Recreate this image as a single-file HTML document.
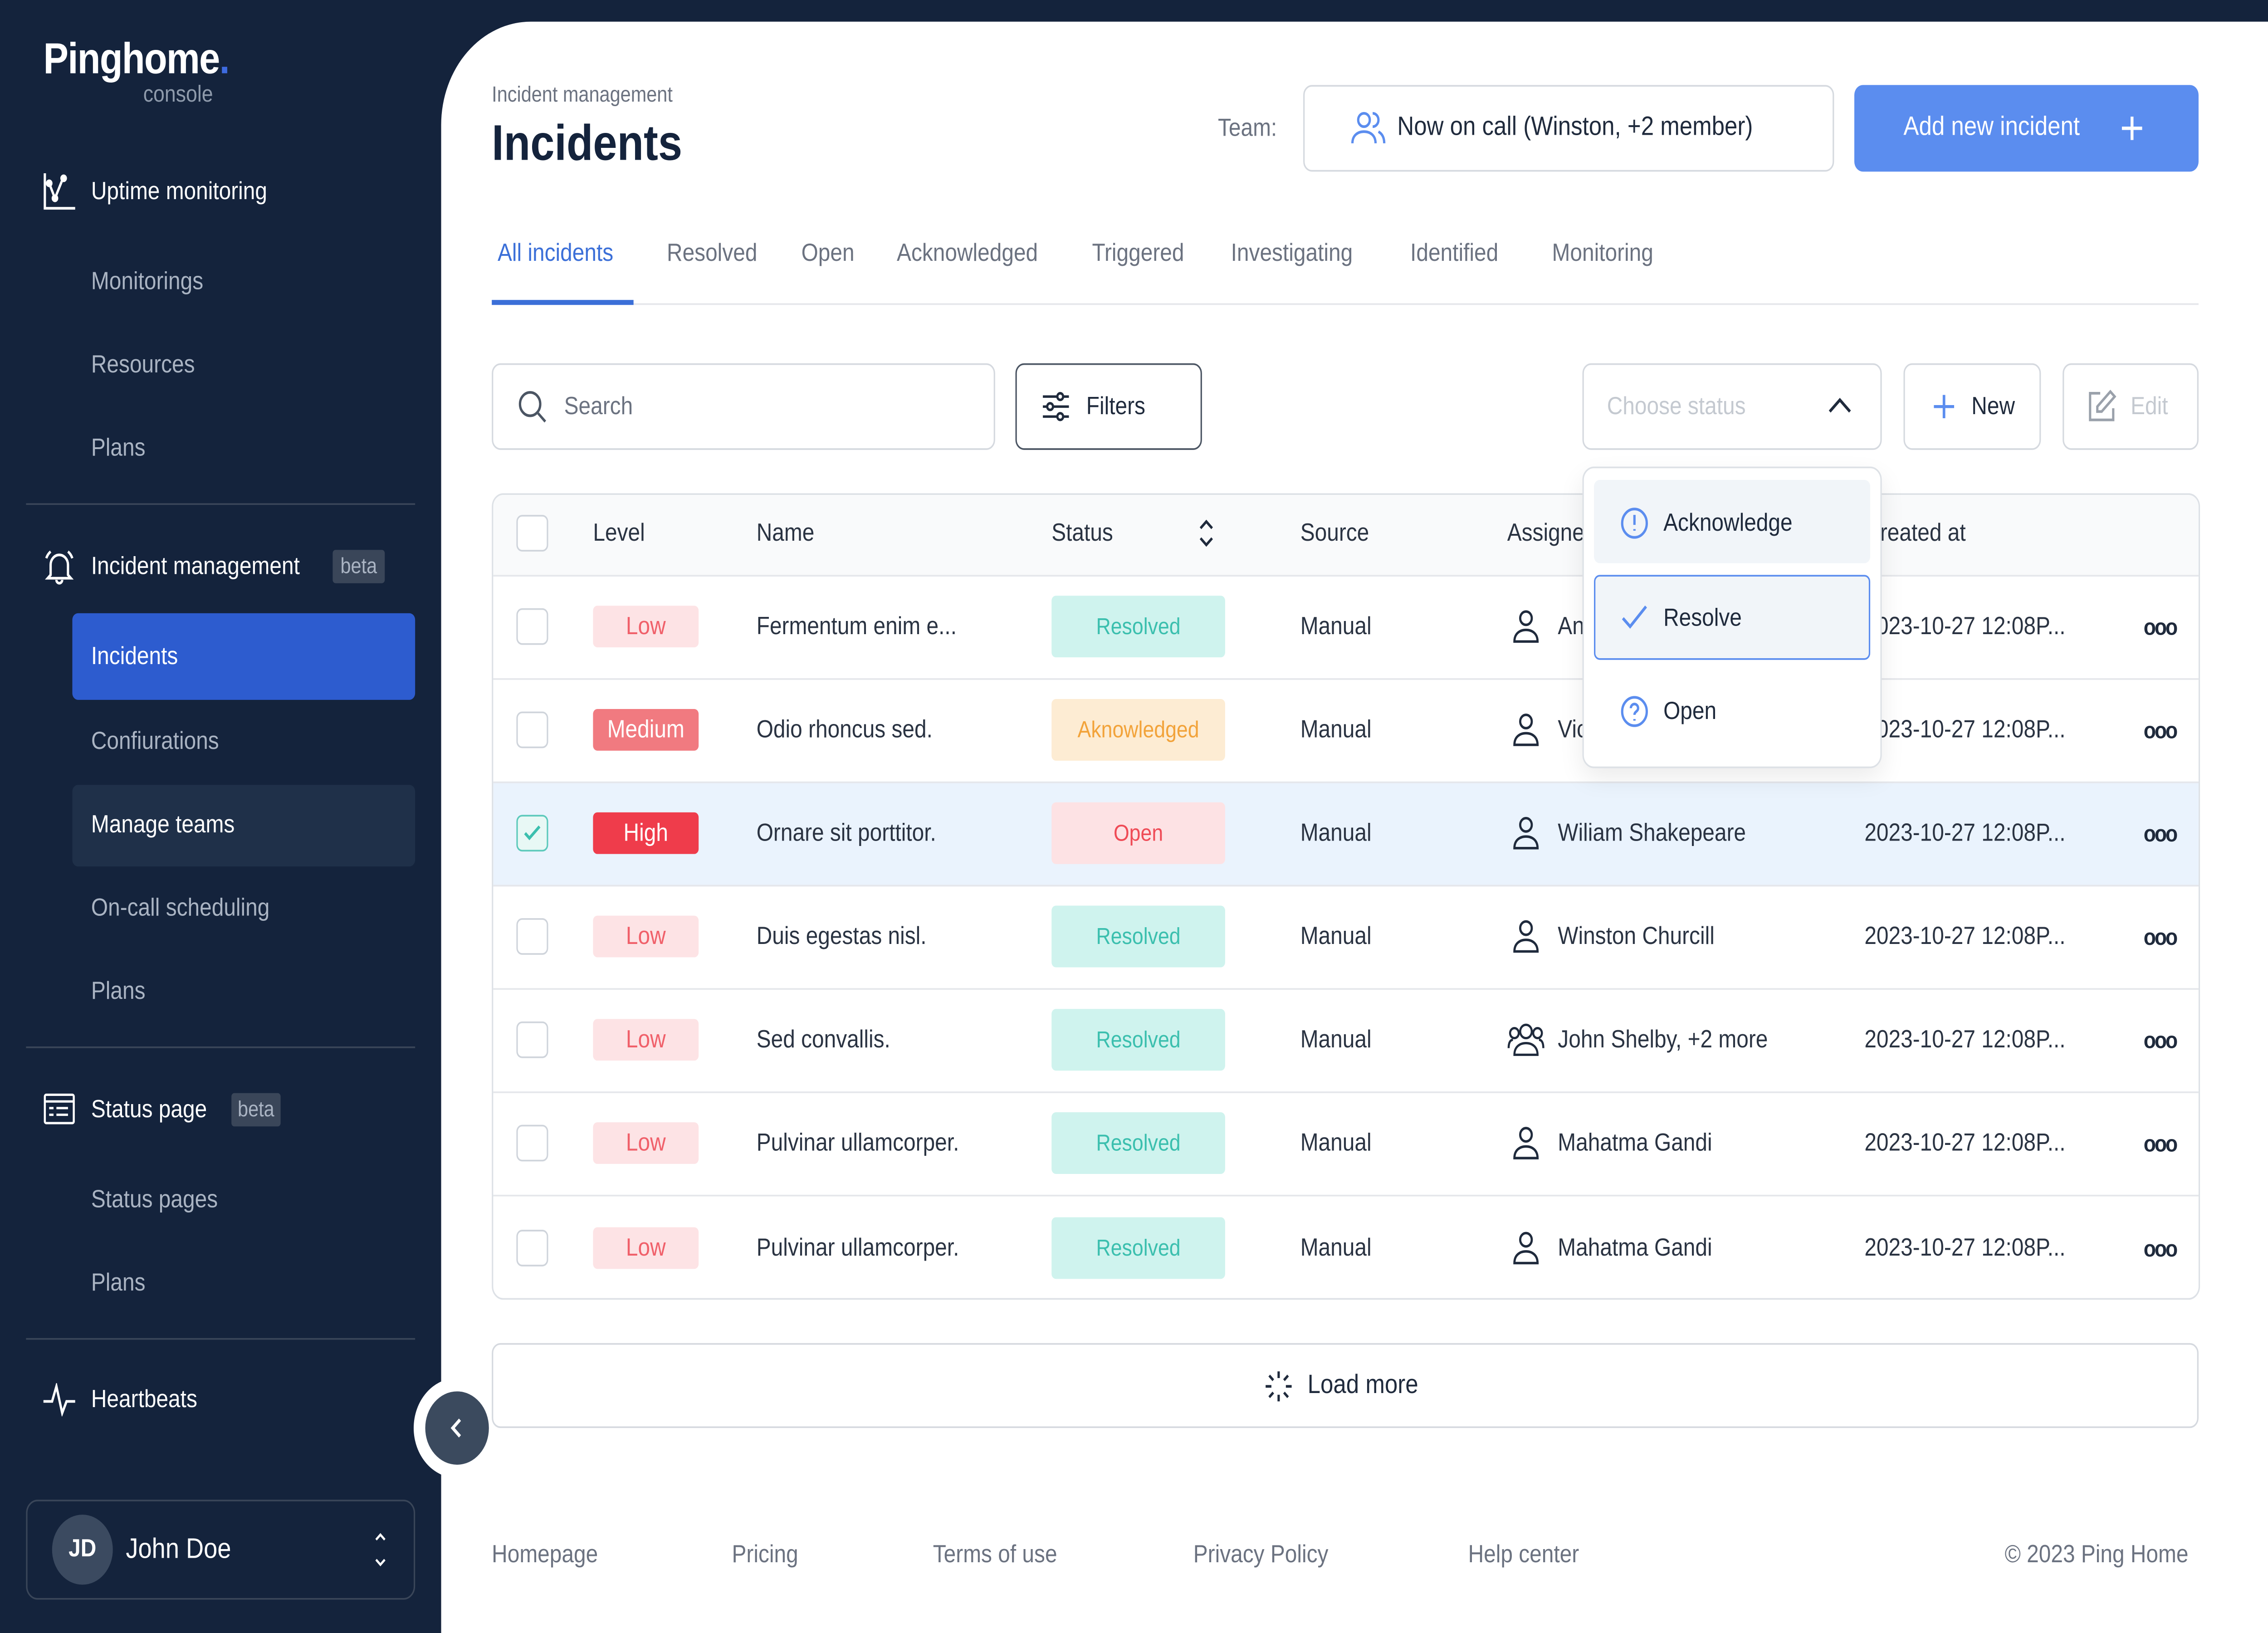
<!DOCTYPE html>
<html><head><meta charset="utf-8"><style>
*{box-sizing:border-box;margin:0;padding:0}
html,body{width:100vw;height:100vh;overflow:hidden;background:#14233c}
#s{position:absolute;left:0;top:0;width:1568px;height:980px;transform:scale(3.673469);transform-origin:0 0;font-family:"Liberation Sans",sans-serif;background:#14233c}
.a{position:absolute;white-space:nowrap}
.sb{color:#fff;font-size:15px}
.sub{color:#aab4c3;font-size:15px}
.vc{transform:translateY(-50%)}
.main{position:absolute;left:305px;top:13px;width:1263px;height:967px;background:#fff;border-top-left-radius:62px}
.tab{position:absolute;top:152px;transform:translateY(-50%);font-size:15px;color:#6b7280}
.box{position:absolute;border:1px solid #d5d9df;border-radius:6px;background:#fff}
.hd{font-size:15px;color:#1f2a3c}
.cell{position:absolute;font-size:15px;color:#2a3342;transform:translateY(-50%);white-space:nowrap}
.cb{position:absolute;left:357px;width:22px;height:22px;border:1.5px solid #cfd4db;border-radius:4px;background:#fff;transform:translateY(-50%)}
.lv{position:absolute;left:410px;width:73px;height:25px;border-radius:3px;font-size:15px;text-align:center;line-height:25px;transform:translateY(-50%)}
.st{position:absolute;left:727px;width:120px;height:37px;border-radius:3px;font-size:14px;text-align:center;line-height:37px;transform:translateY(-50%)}
.res{background:#cff3ee;color:#3bbfae}
.low{background:#fde3e5;color:#f0606a}
.dots{position:absolute;left:1482px;font-size:14px;font-weight:bold;color:#1f2a3c;letter-spacing:-1px;transform:translateY(-50%)}
.ft{position:absolute;top:933px;transform:translateY(-50%);font-size:15px;color:#6b7280}
</style></head><body><div id="s">
<!-- sidebar -->
<div class="a" style="left:30px;top:20px;font-size:26px;font-weight:bold;color:#fff;letter-spacing:-0.5px">Pinghome<span style="color:#3e6be0">.</span></div>
<div class="a" style="left:99px;top:48px;font-size:14px;color:#8e9aab">console</div>
<svg class="a" style="left:30px;top:104px" width="22" height="22" viewBox="0 0 22 22" fill="none" stroke="#fff" stroke-width="1.6"><path d="M1 0v21h21"/><path d="M4 6l4 9 6-13"/><circle cx="8" cy="15" r="1.5" fill="#fff"/><circle cx="14" cy="3" r="1.5" fill="#fff"/><circle cx="4" cy="6" r="1.5" fill="#fff"/></svg>
<div class="a sb vc" style="left:63px;top:115px">Uptime monitoring</div>
<div class="a sub vc" style="left:63px;top:169px">Monitorings</div>
<div class="a sub vc" style="left:63px;top:219px">Resources</div>
<div class="a sub vc" style="left:63px;top:269px">Plans</div>
<div class="a" style="left:18px;top:302px;width:269px;height:1px;background:#3a4659"></div>
<svg class="a" style="left:30px;top:329px" width="22" height="22" viewBox="0 0 22 22" fill="none" stroke="#fff" stroke-width="1.6"><path d="M5 16V10a6 6 0 0112 0v6l2 2H3z"/><path d="M9 19a2 2 0 004 0"/><path d="M2 6a9 9 0 013-4M20 6a9 9 0 00-3-4"/></svg>
<div class="a sb vc" style="left:63px;top:340px">Incident management</div>
<div class="a" style="left:230px;top:330px;width:36px;height:20px;background:#3a4659;color:#aab4c3;font-size:13px;text-align:center;line-height:20px;border-radius:2px">beta</div>
<div class="a" style="left:50px;top:368px;width:237px;height:52px;background:#2d5ccf;border-radius:4px"></div>
<div class="a sb vc" style="left:63px;top:394px">Incidents</div>
<div class="a sub vc" style="left:63px;top:445px">Confiurations</div>
<div class="a" style="left:50px;top:471px;width:237px;height:49px;background:#1f3049;border-radius:4px"></div>
<div class="a sb vc" style="left:63px;top:495px">Manage teams</div>
<div class="a sub vc" style="left:63px;top:545px">On-call scheduling</div>
<div class="a sub vc" style="left:63px;top:595px">Plans</div>
<div class="a" style="left:18px;top:628px;width:269px;height:1px;background:#3a4659"></div>
<svg class="a" style="left:30px;top:656px" width="22" height="20" viewBox="0 0 22 20" fill="none" stroke="#fff" stroke-width="1.4"><rect x="1" y="1" width="20" height="17" rx="1"/><path d="M1 5h20M4 9h3M9 9h8M4 13h3M9 13h8"/></svg>
<div class="a sb vc" style="left:63px;top:666px">Status page</div>
<div class="a" style="left:160px;top:656px;width:34px;height:20px;background:#3a4659;color:#aab4c3;font-size:13px;text-align:center;line-height:20px;border-radius:2px">beta</div>
<div class="a sub vc" style="left:63px;top:720px">Status pages</div>
<div class="a sub vc" style="left:63px;top:770px">Plans</div>
<div class="a" style="left:18px;top:803px;width:269px;height:1px;background:#3a4659"></div>
<svg class="a" style="left:30px;top:830px" width="22" height="20" viewBox="0 0 22 20" fill="none" stroke="#fff" stroke-width="1.6"><path d="M0 11h6l3-9 4 16 3-7h6"/></svg>
<div class="a sb vc" style="left:63px;top:840px">Heartbeats</div>
<div class="a" style="left:18px;top:900px;width:269px;height:60px;border:1px solid #3a4659;border-radius:8px"></div>
<div class="a" style="left:36px;top:909px;width:42px;height:42px;border-radius:50%;background:#3b4a60;color:#fff;font-size:15px;font-weight:bold;text-align:center;line-height:42px">JD</div>
<div class="a vc" style="left:87px;top:930px;color:#fff;font-size:17px">John Doe</div>
<svg class="a" style="left:258px;top:917px" width="10" height="26" viewBox="0 0 10 26" fill="none" stroke="#fff" stroke-width="1.4"><path d="M2 7l3-3 3 3M2 19l3 3 3-3"/></svg>
<!-- main -->
<div class="main"></div>
<div class="a" style="left:286px;top:827px;width:60px;height:60px;border-radius:50%;background:#fff"></div>
<div class="a" style="left:294px;top:835px;width:44px;height:44px;border-radius:50%;background:#3b4a5e"></div>
<svg class="a" style="left:309px;top:850px" width="14" height="14" viewBox="0 0 14 14" fill="none" stroke="#fff" stroke-width="2"><path d="M9 2L4 7l5 5"/></svg>
<div class="a" style="left:340px;top:49px;font-size:13px;color:#6b7280">Incident management</div>
<div class="a" style="left:340px;top:70px;font-size:30px;font-weight:bold;color:#14233c">Incidents</div>
<div class="a vc" style="left:842px;top:77px;font-size:15px;color:#6b7280">Team:</div>
<div class="box" style="left:901px;top:51px;width:367px;height:52px"></div>
<svg class="a" style="left:934px;top:66px" width="24" height="22" viewBox="0 0 24 22" fill="none" stroke="#5b8def" stroke-width="1.6"><circle cx="9" cy="6" r="4"/><path d="M1 20c0-5 4-7 8-7s8 2 8 7"/><path d="M15 2a4 4 0 010 8M19 13c2 1 4 3 4 7"/></svg>
<div class="a vc" style="left:966px;top:77px;font-size:16px;color:#1f2a3c">Now on call (Winston, +2 member)</div>
<div class="a" style="left:1282px;top:51px;width:238px;height:52px;background:#5b8def;border-radius:6px"></div>
<div class="a vc" style="left:1316px;top:77px;font-size:16px;color:#fff">Add new incident</div>
<svg class="a" style="left:1466px;top:69px" width="16" height="16" viewBox="0 0 16 16" stroke="#fff" stroke-width="2"><path d="M8 1v14M1 8h14"/></svg>
<!-- tabs -->
<div class="tab" style="left:344px;color:#3b6fd8">All incidents</div>
<div class="tab" style="left:461px">Resolved</div>
<div class="tab" style="left:554px">Open</div>
<div class="tab" style="left:620px">Acknowledged</div>
<div class="tab" style="left:755px">Triggered</div>
<div class="tab" style="left:851px">Investigating</div>
<div class="tab" style="left:975px">Identified</div>
<div class="tab" style="left:1073px">Monitoring</div>
<div class="a" style="left:340px;top:182px;width:1180px;height:1px;background:#e5e7eb"></div>
<div class="a" style="left:340px;top:180px;width:98px;height:3px;background:#3b6fd8"></div>
<!-- toolbar -->
<div class="box" style="left:340px;top:218px;width:348px;height:52px"></div>
<svg class="a" style="left:358px;top:234px" width="20" height="20" viewBox="0 0 20 20" fill="none" stroke="#4b5563" stroke-width="1.6"><circle cx="8.5" cy="8.5" r="7"/><path d="M14 14l5 5"/></svg>
<div class="a vc" style="left:390px;top:244px;font-size:15px;color:#6b7280">Search</div>
<div class="box" style="left:702px;top:218px;width:129px;height:52px;border-color:#4b5563"></div>
<svg class="a" style="left:720px;top:234px" width="20" height="20" viewBox="0 0 20 20" fill="none" stroke="#1f2a3c" stroke-width="1.5"><path d="M1 4h18M1 10h18M1 16h18"/><circle cx="13" cy="4" r="2" fill="#fff"/><circle cx="6" cy="10" r="2" fill="#fff"/><circle cx="13" cy="16" r="2" fill="#fff"/></svg>
<div class="a vc" style="left:751px;top:244px;font-size:15px;color:#1f2a3c">Filters</div>
<div class="box" style="left:1094px;top:218px;width:207px;height:52px"></div>
<div class="a vc" style="left:1111px;top:244px;font-size:15px;color:#c4c9d0">Choose status</div>
<svg class="a" style="left:1263px;top:237px" width="18" height="12" viewBox="0 0 18 12" fill="none" stroke="#1f2a3c" stroke-width="1.8"><path d="M2 10l7-7 7 7"/></svg>
<div class="box" style="left:1316px;top:218px;width:95px;height:52px"></div>
<svg class="a" style="left:1336px;top:236px" width="16" height="16" viewBox="0 0 16 16" stroke="#5b8def" stroke-width="1.8"><path d="M8 1v14M1 8h14"/></svg>
<div class="a vc" style="left:1363px;top:244px;font-size:15px;color:#1f2a3c">New</div>
<div class="box" style="left:1426px;top:218px;width:94px;height:52px"></div>
<svg class="a" style="left:1442px;top:233px" width="22" height="22" viewBox="0 0 22 22" fill="none" stroke="#9aa1ab" stroke-width="1.6"><path d="M10 3H3v16h16v-7"/><path d="M17 2l3 3-9 9H8v-3z"/></svg>
<div class="a vc" style="left:1473px;top:244px;font-size:15px;color:#c4c9d0">Edit</div>
<!-- table -->
<div class="a" style="left:340px;top:296px;width:1181px;height:484px;border:1px solid #dde1e6;border-radius:8px;overflow:hidden;background:#fff">
 <div style="position:absolute;left:0;top:0;width:100%;height:49px;background:#f9fafb;border-bottom:1px solid #e5e7eb"></div>
 <div style="position:absolute;left:0;top:110px;width:100%;height:1px;background:#e5e7eb"></div>
 <div style="position:absolute;left:0;top:172px;width:100%;height:63px;background:#eaf3fd;border-top:1px solid #e5e7eb;border-bottom:1px solid #e5e7eb"></div>
 <div style="position:absolute;left:0;top:296px;width:100%;height:1px;background:#e5e7eb"></div>
 <div style="position:absolute;left:0;top:358px;width:100%;height:1px;background:#e5e7eb"></div>
 <div style="position:absolute;left:0;top:420px;width:100%;height:1px;background:#e5e7eb"></div>
</div>
<div class="cb" style="top:320px"></div>
<div class="cell hd" style="left:410px;top:320px">Level</div>
<div class="cell hd" style="left:523px;top:320px">Name</div>
<div class="cell hd" style="left:727px;top:320px">Status</div>
<svg class="a" style="left:827px;top:310px" width="14" height="20" viewBox="0 0 14 20" fill="none" stroke="#1f2a3c" stroke-width="1.6"><path d="M3 7l4-4 4 4M3 13l4 4 4-4"/></svg>
<div class="cell hd" style="left:899px;top:320px">Source</div>
<div class="cell hd" style="left:1042px;top:320px">Assignee</div>
<div class="cell hd" style="left:1289px;top:320px">Created at</div>

<div class="cb" style="top:376px"></div><div class="lv low" style="top:376px">Low</div><div class="cell" style="left:523px;top:376px">Fermentum enim e...</div><div class="st res" style="top:376px">Resolved</div><div class="cell" style="left:899px;top:376px">Manual</div><div class="cell" style="left:1077px;top:376px">Ann</div><div class="cell" style="left:1289px;top:376px">2023-10-27 12:08P...</div><div class="dots" style="top:376px">ooo</div>
<div class="cb" style="top:438px"></div><div class="lv" style="top:438px;background:#f17a80;color:#fff">Medium</div><div class="cell" style="left:523px;top:438px">Odio rhoncus sed.</div><div class="st" style="top:438px;background:#fdecd3;color:#f2a33a">Aknowledged</div><div class="cell" style="left:899px;top:438px">Manual</div><div class="cell" style="left:1077px;top:438px">Vic</div><div class="cell" style="left:1289px;top:438px">2023-10-27 12:08P...</div><div class="dots" style="top:438px">ooo</div>
<div class="cb" style="top:500px;border-color:#5cc9bb;background:#e8f8f5"></div><svg class="a" style="left:361px;top:493px" width="14" height="14" viewBox="0 0 14 14" fill="none" stroke="#3bbfae" stroke-width="1.8"><path d="M2 7l3 3 7-7"/></svg><div class="lv" style="top:500px;background:#ef3c4b;color:#fff">High</div><div class="cell" style="left:523px;top:500px">Ornare sit porttitor.</div><div class="st" style="top:500px;background:#fde2e4;color:#ef4b56">Open</div><div class="cell" style="left:899px;top:500px">Manual</div><div class="cell" style="left:1077px;top:500px">Wiliam Shakepeare</div><div class="cell" style="left:1289px;top:500px">2023-10-27 12:08P...</div><div class="dots" style="top:500px">ooo</div>
<div class="cb" style="top:562px"></div><div class="lv low" style="top:562px">Low</div><div class="cell" style="left:523px;top:562px">Duis egestas nisl.</div><div class="st res" style="top:562px">Resolved</div><div class="cell" style="left:899px;top:562px">Manual</div><div class="cell" style="left:1077px;top:562px">Winston Churcill</div><div class="cell" style="left:1289px;top:562px">2023-10-27 12:08P...</div><div class="dots" style="top:562px">ooo</div>
<div class="cb" style="top:624px"></div><div class="lv low" style="top:624px">Low</div><div class="cell" style="left:523px;top:624px">Sed convallis.</div><div class="st res" style="top:624px">Resolved</div><div class="cell" style="left:899px;top:624px">Manual</div><div class="cell" style="left:1077px;top:624px">John Shelby, +2 more</div><div class="cell" style="left:1289px;top:624px">2023-10-27 12:08P...</div><div class="dots" style="top:624px">ooo</div>
<div class="cb" style="top:686px"></div><div class="lv low" style="top:686px">Low</div><div class="cell" style="left:523px;top:686px">Pulvinar ullamcorper.</div><div class="st res" style="top:686px">Resolved</div><div class="cell" style="left:899px;top:686px">Manual</div><div class="cell" style="left:1077px;top:686px">Mahatma Gandi</div><div class="cell" style="left:1289px;top:686px">2023-10-27 12:08P...</div><div class="dots" style="top:686px">ooo</div>
<div class="cb" style="top:749px"></div><div class="lv low" style="top:749px">Low</div><div class="cell" style="left:523px;top:749px">Pulvinar ullamcorper.</div><div class="st res" style="top:749px">Resolved</div><div class="cell" style="left:899px;top:749px">Manual</div><div class="cell" style="left:1077px;top:749px">Mahatma Gandi</div><div class="cell" style="left:1289px;top:749px">2023-10-27 12:08P...</div><div class="dots" style="top:749px">ooo</div>
<svg class="a" style="left:1045px;top:366px" width="20" height="400" viewBox="0 0 20 400" fill="none" stroke="#1f2a3c" stroke-width="1.5">
<g><circle cx="10" cy="5" r="4"/><path d="M2 19c0-5 4-7 8-7s8 2 8 7z"/></g>
<g transform="translate(0,62)"><circle cx="10" cy="5" r="4"/><path d="M2 19c0-5 4-7 8-7s8 2 8 7z"/></g>
<g transform="translate(0,124)"><circle cx="10" cy="5" r="4"/><path d="M2 19c0-5 4-7 8-7s8 2 8 7z"/></g>
<g transform="translate(0,186)"><circle cx="10" cy="5" r="4"/><path d="M2 19c0-5 4-7 8-7s8 2 8 7z"/></g>
<g transform="translate(0,310)"><circle cx="10" cy="5" r="4"/><path d="M2 19c0-5 4-7 8-7s8 2 8 7z"/></g>
<g transform="translate(0,373)"><circle cx="10" cy="5" r="4"/><path d="M2 19c0-5 4-7 8-7s8 2 8 7z"/></g>
</svg>
<svg class="a" style="left:1042px;top:613px" width="26" height="22" viewBox="0 0 26 22" fill="none" stroke="#1f2a3c" stroke-width="1.4"><circle cx="13" cy="6" r="4"/><path d="M5 20c0-5 4-7 8-7s8 2 8 7z"/><circle cx="5" cy="7" r="3"/><circle cx="21" cy="7" r="3"/><path d="M1 16c0-3 1-5 3-5M25 16c0-3-1-5-3-5"/></svg>
<!-- dropdown -->
<div class="a" style="left:1094px;top:280px;width:207px;height:181px;background:#fff;border:1px solid #dde1e6;border-radius:8px;box-shadow:0 6px 16px rgba(0,0,0,0.08)"></div>
<div class="a" style="left:1102px;top:288px;width:191px;height:50px;background:#f1f5f9;border-radius:4px"></div>
<div class="a" style="left:1102px;top:345px;width:191px;height:51px;background:#f1f5f9;border:1.5px solid #5b8def;border-radius:4px"></div>
<svg class="a" style="left:1120px;top:304px" width="20" height="20" viewBox="0 0 20 20" fill="none" stroke="#5b8def" stroke-width="1.6"><circle cx="10" cy="10" r="8.5"/><path d="M10 5v6M10 13.5v1"/></svg>
<div class="a vc" style="left:1150px;top:314px;font-size:15px;color:#1f2a3c">Acknowledge</div>
<svg class="a" style="left:1120px;top:362px" width="20" height="16" viewBox="0 0 20 16" fill="none" stroke="#5b8def" stroke-width="1.8"><path d="M2 9l5 5L18 2"/></svg>
<div class="a vc" style="left:1150px;top:371px;font-size:15px;color:#1f2a3c">Resolve</div>
<svg class="a" style="left:1120px;top:417px" width="20" height="20" viewBox="0 0 20 20" fill="none" stroke="#5b8def" stroke-width="1.6"><circle cx="10" cy="10" r="8.5"/><path d="M7.5 8a2.5 2.5 0 115 0c0 2-2.5 2-2.5 4M10 14.5v1"/></svg>
<div class="a vc" style="left:1150px;top:427px;font-size:15px;color:#1f2a3c">Open</div>
<!-- load more -->
<div class="box" style="left:340px;top:806px;width:1180px;height:51px"></div>
<svg class="a" style="left:874px;top:822px" width="20" height="20" viewBox="0 0 20 20" fill="none" stroke="#1f2a3c" stroke-width="1.6"><path d="M10 1v4M10 15v4M1 10h4M15 10h4M3.5 3.5l2.8 2.8M13.7 13.7l2.8 2.8M3.5 16.5l2.8-2.8M13.7 6.3l2.8-2.8"/></svg>
<div class="a vc" style="left:904px;top:832px;font-size:16px;color:#1f2a3c">Load more</div>
<!-- footer -->
<div class="ft" style="left:340px">Homepage</div>
<div class="ft" style="left:506px">Pricing</div>
<div class="ft" style="left:645px">Terms of use</div>
<div class="ft" style="left:825px">Privacy Policy</div>
<div class="ft" style="left:1015px">Help center</div>
<div class="ft" style="left:1386px">© 2023 Ping Home</div>
</div>
<script>
(function(){var s=document.getElementById('s');function f(){var w=document.documentElement.clientWidth||window.innerWidth,h=document.documentElement.clientHeight||window.innerHeight;s.style.transform='scale('+(w/1568)+','+(h/980)+')';}f();window.addEventListener('resize',f);})();
</script>
</body></html>
